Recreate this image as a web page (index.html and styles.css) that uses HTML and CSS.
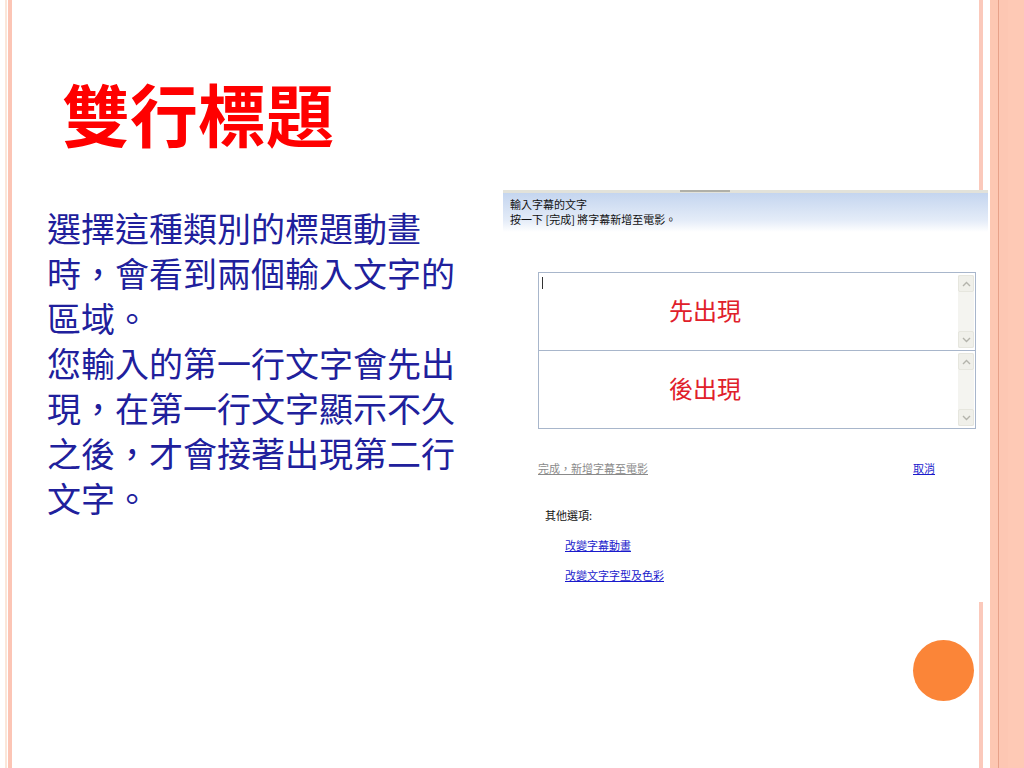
FILE: index.html
```html
<!DOCTYPE html>
<html>
<head>
<meta charset="UTF-8">
<link rel="stylesheet" href="styles.css">
</head>
<body>
<div class="slide">
    <h1 class="title">雙行標題</h1>

    <div class="content">
        <div class="notes">
            <p>選擇這種類別的標題動畫時，會看到兩個輸入文字的區域。</p>
            <p>您輸入的第一行文字會先出現，在第一行文字顯示不久之後，才會接著出現第二行文字。</p>
        </div>

        <div class="shot">
            <div class="shot-top"><span class="tab"></span></div>
            <div class="shot-head">
                輸入字幕的文字<br>
                按一下 [完成] 將字幕新增至電影。
            </div>
            <div class="shot-body">
                <div class="boxes">
                    <div class="box first">
                        <span class="caret"></span>
                        <div class="box-text">先出現</div>
                        <div class="scroll">
                            <span class="btn"><svg width="9" height="6" viewBox="0 0 9 6"><path d="M1 5 L4.5 1.5 L8 5" fill="none" stroke="#b4b4ac" stroke-width="1.4"/></svg></span>
                            <span class="btn"><svg width="9" height="6" viewBox="0 0 9 6"><path d="M1 1 L4.5 4.5 L8 1" fill="none" stroke="#b4b4ac" stroke-width="1.4"/></svg></span>
                        </div>
                    </div>
                    <div class="box">
                        <div class="box-text">後出現</div>
                        <div class="scroll">
                            <span class="btn"><svg width="9" height="6" viewBox="0 0 9 6"><path d="M1 5 L4.5 1.5 L8 5" fill="none" stroke="#b4b4ac" stroke-width="1.4"/></svg></span>
                            <span class="btn"><svg width="9" height="6" viewBox="0 0 9 6"><path d="M1 1 L4.5 4.5 L8 1" fill="none" stroke="#b4b4ac" stroke-width="1.4"/></svg></span>
                        </div>
                    </div>
                </div>

                <div class="actions">
                    <a class="done">完成，新增字幕至電影</a>
                    <a class="link">取消</a>
                </div>

                <div class="other">其他選項:</div>
                <div class="options">
                    <a class="link">改變字幕動畫</a>
                    <a class="link">改變文字字型及色彩</a>
                </div>
            </div>
        </div>
    </div>

    <div class="dot"></div>
</div>
</body>
</html>
```

FILE: styles.css
```css
body
{
    margin: 0;
    padding: 0;
    background: #fff;
}

.slide
{
    position: relative;
    width: 1024px;
    height: 768px;
    overflow: hidden;
    font-family: "Noto Sans CJK TC", "Noto Sans", sans-serif;
    background:
        linear-gradient(to right, #fff 5px, #fbe6d9 5px, #fbe6d9 7px, #fff 7px, #fff 8px, #fcc5b5 8px, #fcc5b5 12px, transparent 12px) left top / 12px 100% no-repeat,
        linear-gradient(to right, #fff 0, #fff 979px, #fbc9bb 979px, #fbc9bb 983px, #fff 983px, #fff 990px, #fdc7b2 990px, #fdc7b2 998px, #e7a189 998px, #e7a189 999px, #fdc7b3 999px, #fdc7b3 1008px, #fec9b5 1008px) left top / 100% 100% no-repeat;
}

.title
{
    margin: 0;
    padding: 79px 0 0 62px;
    font-size: 68px;
    line-height: 68px;
    font-weight: 700;
    color: #ff0000;
}

.content
{
    display: flex;
    margin-top: 43px;
    padding-left: 47px;
}

.notes
{
    width: 420px;
    margin-top: 15px;
    font-size: 34px;
    line-height: 45px;
    color: #20209c;
}

.notes p
{
    margin: 0;
}

/* screenshot of the title dialog */
.shot
{
    width: 485px;
    height: 412px;
    margin-left: 36px;
    background: #fff;
    font-size: 11px;
    line-height: 15px;
    color: #111;
}

.shot-top
{
    height: 3px;
    background: #e2e2da;
}

.shot-top .tab
{
    display: block;
    width: 50px;
    height: 2px;
    margin-left: 177px;
    background: #b0b0a8;
}

.shot-head
{
    height: 31px;
    padding: 4px 7px;
    background: linear-gradient(#c4d5ef, #e4ecf8 70%, #fff);
}

.shot-body
{
    padding: 40px 0 0 35px;
}

.boxes
{
    width: 436px;
    border: 1px solid #a8b6cb;
}

.box
{
    position: relative;
    display: flex;
    height: 77px;
}

.box.first
{
    border-bottom: 1px solid #a8b6cb;
}

.caret
{
    position: absolute;
    left: 3px;
    top: 4px;
    width: 1px;
    height: 12px;
    background: #333;
}

.box-text
{
    flex: 1;
    display: flex;
    align-items: center;
    padding: 0 0 4px 130px;
    font-size: 24px;
    line-height: 24px;
    color: #e0202a;
}

.scroll
{
    display: flex;
    flex-direction: column;
    justify-content: space-between;
    width: 16px;
    margin: 2px 1px 2px 0;
    background: #f4f4f0;
}

.btn
{
    display: flex;
    align-items: center;
    justify-content: center;
    height: 15px;
    border: 1px solid #e6e6de;
    border-radius: 2px;
    background: #f0f0ea;
}

.actions
{
    display: flex;
    justify-content: space-between;
    width: 397px;
    margin-top: 31px;
    font-size: 11px;
    line-height: 16px;
}

.done
{
    color: #8a8a8a;
    text-decoration: underline;
}

.link
{
    color: #1a1acc;
    text-decoration: underline;
}

.other
{
    margin-top: 31px;
    padding-left: 7px;
    font-size: 11px;
    line-height: 16px;
    color: #111;
}

.options
{
    display: flex;
    flex-direction: column;
    align-items: flex-start;
    gap: 14px;
    margin-top: 14px;
    padding-left: 27px;
    font-size: 11px;
    line-height: 16px;
}

.dot
{
    position: absolute;
    left: 913px;
    top: 640px;
    width: 61px;
    height: 61px;
    border-radius: 50%;
    background: #fb8538;
}
```
